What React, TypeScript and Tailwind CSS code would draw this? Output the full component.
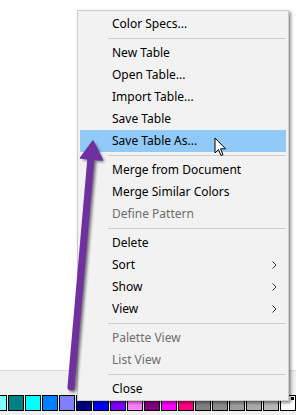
import React from 'react';

type Item =
  | { kind: 'sep' }
  | { kind: 'item'; label: string; disabled?: boolean; sub?: boolean; active?: boolean };

const items: Item[] = [
  { kind: 'item', label: 'Color Specs...' },
  { kind: 'sep' },
  { kind: 'item', label: 'New Table' },
  { kind: 'item', label: 'Open Table...' },
  { kind: 'item', label: 'Import Table...' },
  { kind: 'item', label: 'Save Table' },
  { kind: 'item', label: 'Save Table As...', active: true },
  { kind: 'sep' },
  { kind: 'item', label: 'Merge from Document' },
  { kind: 'item', label: 'Merge Similar Colors' },
  { kind: 'item', label: 'Define Pattern', disabled: true },
  { kind: 'sep' },
  { kind: 'item', label: 'Delete' },
  { kind: 'item', label: 'Sort', sub: true },
  { kind: 'item', label: 'Show', sub: true },
  { kind: 'item', label: 'View', sub: true },
  { kind: 'sep' },
  { kind: 'item', label: 'Palette View', disabled: true },
  { kind: 'item', label: 'List View', disabled: true },
  { kind: 'sep' },
  { kind: 'item', label: 'Close' },
];

// palette swatches along the bottom bar
const swatches = [
  '#80ffff', '#008080', '#00ffff', '#0080ff', '#8080ff',
  '#000080', '#0000ff', '#8000ff', '#ff80ff', '#800080',
  '#ff00ff', '#ff0080', '#808080', '#8c8c8c', '#9c9c9c',
  '#aaaaaa', '#b8b8b8',
];

const Chevron: React.FC = () => (
  <svg width="5" height="8" viewBox="0 0 5 8" className="mr-[9px]">
    <polyline points="0.5,0.5 4,4 0.5,7.5" fill="none" stroke="#333" strokeWidth="1" />
  </svg>
);

const App: React.FC = () => {
  return (
    <div
      className="relative w-[296px] h-[415px] overflow-hidden bg-white"
      style={{ fontFamily: '"Noto Sans", "Open Sans", sans-serif' }}
    >
      {/* Document area + palette bar */}
      <div className="flex flex-col h-full">
        <div className="flex-1 bg-white" />
        <div className="h-[45px] bg-[#f0f0f0] border-t border-[#dadada] flex flex-col">
          <div className="h-[24px]" />
          <div className="flex gap-[1px] ml-[-9px]">
            {swatches.map((c, i) => (
              <div key={i} className="w-[16px] h-[16px] border border-black shrink-0" style={{ background: c }} />
            ))}
            <div className="relative w-[16px] h-[16px] border border-black bg-white shrink-0">
              <div className="absolute right-[1px] top-[1px] w-[3px] h-[3px] bg-black" />
            </div>
          </div>
        </div>
      </div>

      {/* Context menu */}
      <div className="absolute left-[77px] top-[10px] w-[212px] bg-[#f2f2f2] border border-[#cccccc] px-[2px] pt-[2px] pb-[0px] shadow-[2px_2px_3px_rgba(0,0,0,0.45)]">
        {items.map((it, i) =>
          it.kind === 'sep' ? (
            <div key={i} className="h-[7px] flex items-center pl-[28px]">
              <div className="h-[1px] w-full bg-[#cdcdcd]" />
            </div>
          ) : (
            <div
              key={i}
              className={`h-[22px] flex items-center justify-between pl-[32px] text-[12px] ${
                it.active ? 'bg-[#91c9f7]' : ''
              } ${it.disabled ? 'text-[#6d6d6d]' : 'text-black'}`}
            >
              <span>{it.label}</span>
              {it.sub && <Chevron />}
            </div>
          )
        )}
      </div>

      {/* Purple annotation arrow */}
      <svg className="absolute left-0 top-0 pointer-events-none" width="296" height="415" viewBox="0 0 296 415">
        <defs>
          <filter id="blur" x="-50%" y="-50%" width="200%" height="200%">
            <feGaussianBlur stdDeviation="1.5" />
          </filter>
        </defs>
        <g filter="url(#blur)" opacity="0.55" transform="translate(2 2)">
          <line x1="71" y1="387" x2="91" y2="157" stroke="#000" strokeWidth="7" strokeLinecap="round" />
          <polygon points="93,141 102.5,160 80.5,158" fill="#000" />
        </g>
        <line x1="71" y1="387" x2="91" y2="157" stroke="#7030a0" strokeWidth="7" strokeLinecap="round" />
        <polygon points="93,141 102.5,160 80.5,158" fill="#7030a0" stroke="#7030a0" strokeWidth="1.5" strokeLinejoin="round" />
      </svg>

      {/* Mouse pointer */}
      <svg className="absolute left-[214px] top-[137px] pointer-events-none" width="13" height="21" viewBox="0 0 13 21">
        <path
          d="M1 1 L1 16 L4.5 12.5 L7 18.5 L9 17.7 L6.6 11.8 L11.5 11.8 Z"
          fill="#fff"
          stroke="#000"
          strokeWidth="1"
          strokeLinejoin="miter"
        />
      </svg>
    </div>
  );
};

export default App;
